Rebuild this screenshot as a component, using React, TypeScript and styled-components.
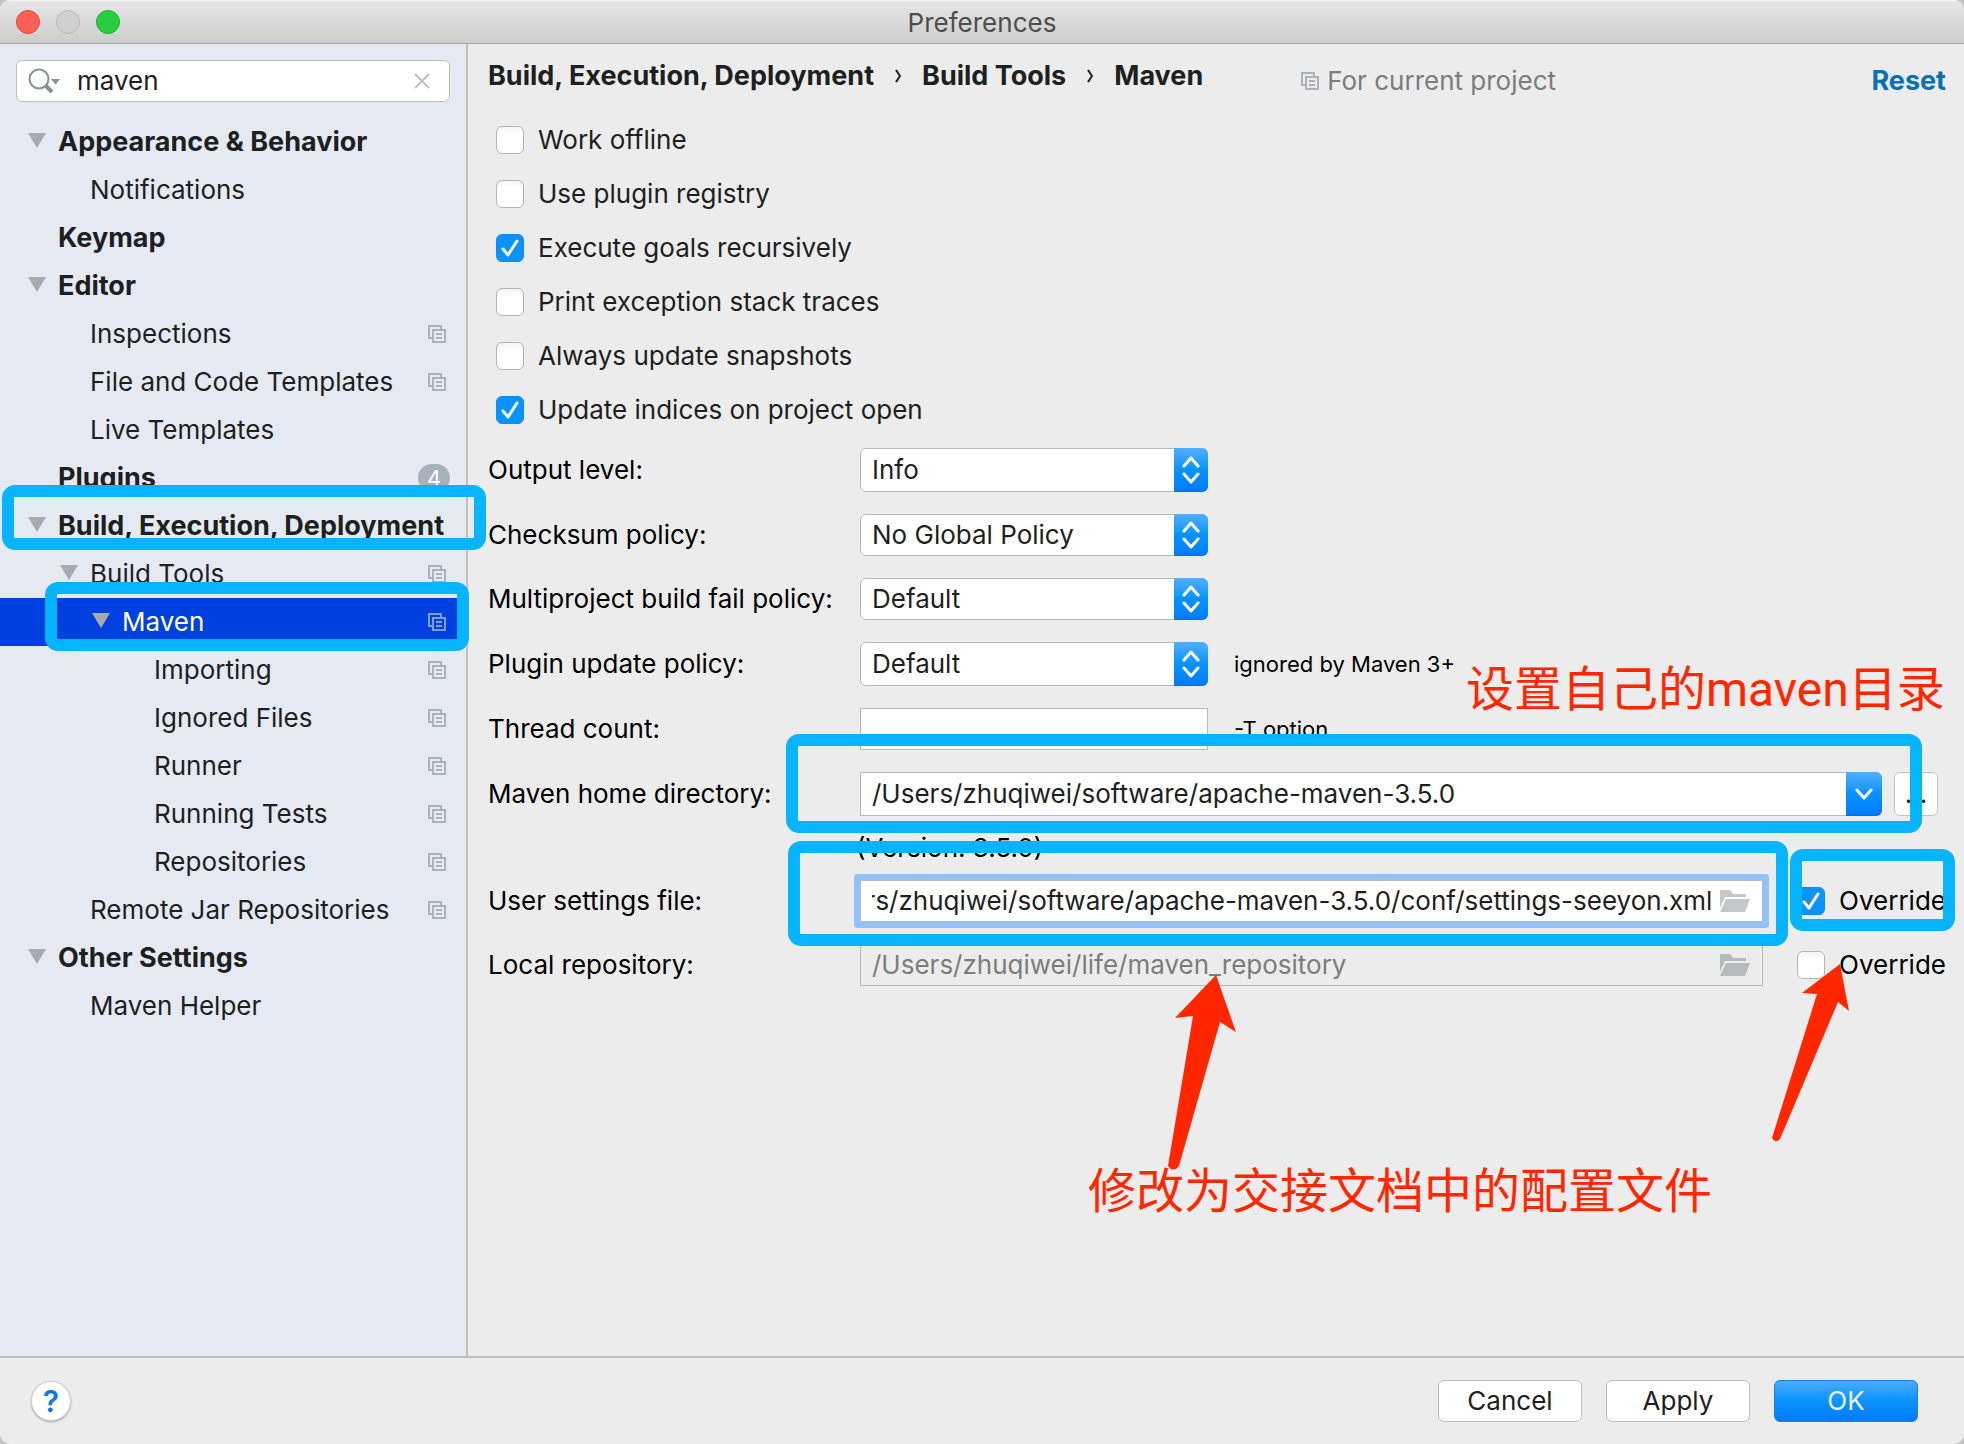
import React, { useLayoutEffect, useRef, useState } from "react";
import styled, { createGlobalStyle, css } from "styled-components";

const uiFont = `Inter, "Noto Sans CJK SC", sans-serif`;

const GlobalStyle = createGlobalStyle`
  *, *::before, *::after { box-sizing: border-box; }
  body { margin: 0; background: #c4c4c4; }
  body, input, select, button { font-family: ${uiFont}; font-size: 26px; line-height: 32px; }
`;

const Window = styled.div`
  position: relative;
  display: flex;
  flex-direction: column;
  min-height: 100vh;
  border-radius: 10px;
  overflow: hidden;
  background: #ececec;
  color: #1d1f21;
`;

/* ---------- title bar ---------- */
const TitleBar = styled.header`
  display: grid;
  grid-template-columns: 1fr auto 1fr;
  align-items: center;
  height: 44px;
  padding: 0 16px;
  border-top: 1px solid #f4f4f4;
  border-bottom: 1px solid #a5a5a5;
  background: linear-gradient(#e6e6e6, #cdcdcd);
`;
const Lights = styled.div`
  display: flex;
  gap: 16px;
`;
const Light = styled.button<{ $fill: string; $edge: string }>`
  width: 24px;
  height: 24px;
  padding: 0;
  border: 1px solid ${(p) => p.$edge};
  border-radius: 50%;
  background: ${(p) => p.$fill};
`;
const Title = styled.h1`
  margin: 0;
  padding-top: 2px;
  font-size: 26px;
  line-height: 32px;
  font-weight: 400;
  color: #4d4d4d;
`;

/* ---------- sidebar ---------- */
const Main = styled.div`
  display: flex;
  flex: 1;
`;
const Sidebar = styled.aside`
  flex: 0 0 468px;
  min-width: 0;
  border-right: 2px solid #c0c0c0;
  background: #e5eaf2;
`;
const SearchBox = styled.div`
  display: flex;
  align-items: center;
  height: 42px;
  margin: 16px;
  padding: 0 19px 0 11px;
  border: 1px solid #bcbfc2;
  border-radius: 6px;
  background: #fff;
`;
const SearchInput = styled.input`
  flex: 1;
  min-width: 0;
  margin-left: 16px;
  padding: 0;
  border: 0;
  outline: 0;
  background: none;
  color: #1d1f21;
`;
const IconButton = styled.button`
  display: flex;
  padding: 0;
  border: 0;
  background: none;
`;
const Tree = styled.ul`
  margin: 0;
  padding: 0;
  list-style: none;
`;
const TreeRow = styled.li<{ $level: number; $bold?: boolean; $selected?: boolean }>`
  display: flex;
  align-items: center;
  height: 48px;
  padding: 0 20px 0 ${(p) => 28 + 32 * p.$level}px;
  ${(p) => p.$bold && "font-size: 27px; font-weight: 700;"}
  ${(p) =>
    p.$selected &&
    css`
      background: #0040e0;
      color: #fff;
    `}
`;
const TwistySlot = styled.span`
  display: flex;
  flex: 0 0 30px;
  padding-bottom: 4px;
`;
const RowText = styled.span`
  flex: 1;
  white-space: nowrap;
`;
const CountBadge = styled.span`
  width: 32px;
  height: 28px;
  margin-right: -4px;
  border-radius: 14px;
  background: #a7b1ba;
  color: #fff;
  font-size: 22px;
  line-height: 28px;
  font-weight: 400;
  text-align: center;
`;

/* ---------- content ---------- */
const Content = styled.main`
  flex: 1;
  min-width: 0;
  padding: 16px 18px 16px 20px;
`;
const ContentHead = styled.div`
  display: flex;
  height: 42px;
`;
const Crumbs = styled.nav`
  display: flex;
  align-self: flex-start;
  gap: 20px;
  font-size: 27px;
  font-weight: 700;
  white-space: nowrap;
`;
const Separator = styled.span`
  display: flex;
  align-items: center;
`;
const Scope = styled.div`
  display: flex;
  align-items: center;
  gap: 8px;
  margin-left: 98px;
  color: #7c7c7c;
  white-space: nowrap;
`;
const ResetLink = styled.a`
  align-self: center;
  margin-left: auto;
  color: #0a6fb5;
  font-size: 27px;
  font-weight: 700;
  text-decoration: none;
`;
const CheckList = styled.div`
  display: flex;
  flex-direction: column;
  gap: 22px;
  padding: 22px 8px;
`;
const CheckLabel = styled.label`
  display: flex;
  align-items: center;
  gap: 14px;
  white-space: nowrap;
`;
const CheckCell = styled.span`
  display: grid;
  width: 28px;
  height: 32px;
  align-items: center;
  & > * { grid-area: 1 / 1; }
  & > svg { pointer-events: none; }
`;
const CheckInput = styled.input`
  appearance: none;
  width: 28px;
  height: 28px;
  margin: 0;
  border: 1px solid #b4b4b4;
  border-radius: 6px;
  background: linear-gradient(#f3f3f3, #fff 25%);
  &:checked {
    border-color: #0a8cff;
    background: #0a93ff;
  }
`;

const Form = styled.div`
  display: flex;
  flex-direction: column;
  gap: 22px;
`;
const FormRow = styled.div<{ $tall?: boolean }>`
  display: grid;
  grid-template-columns: 372px minmax(0, 1fr);
  align-items: center;
  height: ${(p) => (p.$tall ? 44 : 42)}px;
  color: #000;
`;
const FieldArea = styled.div<{ $gap: number }>`
  display: flex;
  align-items: center;
  align-self: stretch;
  gap: ${(p) => p.$gap}px;
`;
const Hint = styled.span`
  font-size: 22px;
  line-height: 28px;
`;
const VersionNote = styled.div`
  height: 20px;
  padding-left: 368px;
  line-height: 20px;
  color: #000;
`;
const SelectCell = styled.span<{ $grow?: boolean }>`
  display: grid;
  align-self: stretch;
  justify-items: end;
  ${(p) => (p.$grow ? "flex: 1;" : "flex: 0 0 348px;")}
  & > * { grid-area: 1 / 1; }
`;
const SelectBox = styled.select<{ $square?: boolean }>`
  appearance: none;
  width: 100%;
  padding: 0 44px 0 11px;
  border: 1px solid #b9b9b9;
  border-radius: ${(p) => (p.$square ? "0 6px 6px 0" : "6px")};
  background: #fff;
  color: #1d1f21;
`;
const ArrowCap = styled.span<{ $wide?: boolean }>`
  display: grid;
  place-items: center;
  width: ${(p) => (p.$wide ? 36 : 34)}px;
  border-radius: 0 6px 6px 0;
  border-bottom: 1px solid #0a6be0;
  background: linear-gradient(#53aeff, #0a93ff 50%, #007bff);
  pointer-events: none;
`;
const ThreadInput = styled.input`
  align-self: stretch;
  width: 348px;
  padding: 0 11px;
  border: 1px solid #b9b9b9;
  background: #fff;
  outline: 0;
`;
const PathField = styled.div<{ $focused?: boolean }>`
  display: flex;
  flex: 1;
  align-self: stretch;
  align-items: center;
  gap: 8px;
  min-width: 0;
  padding: 0 12px 0 11px;
  border: 1px solid #b9b9b9;
  background: ${(p) => (p.$focused ? "#fff" : "none")};
  ${(p) => p.$focused && "box-shadow: 0 0 0 6px #8fc3f9; border-radius: 1px;"}
`;
const PathInput = styled.input`
  flex: 1;
  min-width: 0;
  padding: 0;
  border: 0;
  outline: 0;
  background: none;
  color: #1d1f21;
  &:disabled { color: #7c7c7c; }
`;
const BrowseButton = styled.button`
  align-self: stretch;
  width: 44px;
  margin-right: 8px;
  padding: 0;
  border: 1px solid #c2c2c2;
  border-radius: 6px;
  background: #fff;
  color: #1d1f21;
`;

/* ---------- footer ---------- */
const Footer = styled.footer`
  display: flex;
  align-items: center;
  gap: 24px;
  height: 88px;
  padding: 0 46px 0 31px;
  border-top: 2px solid #bfbfbf;
`;
const HelpButton = styled.button`
  width: 40px;
  height: 40px;
  margin-right: auto;
  padding: 0;
  border: 1px solid #d0d0d0;
  border-radius: 50%;
  background: #fff;
  box-shadow: 0 1px 2px rgba(0, 0, 0, 0.3);
  color: #0a78e6;
  font-size: 30px;
  font-weight: 600;
`;
const PushButton = styled.button<{ $primary?: boolean }>`
  width: 144px;
  height: 42px;
  padding: 0;
  border: 1px solid ${(p) => (p.$primary ? "#1583ee" : "#bdbdbd")};
  border-radius: 6px;
  background: ${(p) => (p.$primary ? "linear-gradient(#4aacff, #0a93ff 50%, #007aff)" : "#fff")};
  color: ${(p) => (p.$primary ? "#e9f5ff" : "#1d1f21")};
`;

/* ---------- annotations drawn over the window ---------- */
const Marker = styled.div<{ $x: number; $y: number; $w: number; $h: number }>`
  position: absolute;
  left: ${(p) => p.$x}px;
  top: ${(p) => p.$y}px;
  width: ${(p) => p.$w}px;
  height: ${(p) => p.$h}px;
  border: 12px solid #06b4ff;
  border-radius: 13px;
  pointer-events: none;
`;
const Note = styled.div<{ $x: number; $y: number }>`
  position: absolute;
  left: ${(p) => p.$x}px;
  top: ${(p) => p.$y}px;
  color: #ff2600;
  font-family: Roboto, "Noto Sans CJK SC", sans-serif;
  font-size: 48px;
  line-height: 56px;
  white-space: nowrap;
  pointer-events: none;
`;
const Arrows = styled.svg`
  position: absolute;
  left: 1160px;
  top: 960px;
  pointer-events: none;
`;

const ProjectIcon = ({ color = "#aab3bb" }: { color?: string }) => (
  <svg width="18" height="18" viewBox="0 0 18 18" fill="none" stroke={color} strokeWidth="2" aria-hidden="true">
    <path d="M4 13H1V1h12v3" />
    <path d="M5 5h12v12H5z" />
    <path d="M8 9h6M8 13h6" />
  </svg>
);

const Twisty = () => (
  <svg width="18" height="15" viewBox="0 0 18 15" aria-hidden="true">
    <path d="M0 0h18L9 15z" fill="#aaaaaa" />
  </svg>
);

const SearchIcon = () => (
  <svg width="33" height="26" viewBox="0 0 33 26" fill="none" aria-hidden="true">
    <circle cx="11" cy="11" r="9.5" stroke="#84919a" strokeWidth="2" />
    <path d="M17 17l7 7" stroke="#84919a" strokeWidth="4" />
    <path d="M23 11h9l-4.500 5.500z" fill="#84919a" />
  </svg>
);

const ClearIcon = () => (
  <svg width="16" height="16" viewBox="0 0 16 16" stroke="#bcc1c5" strokeWidth="2" aria-hidden="true">
    <path d="M1 1l14 14M15 1L1 15" />
  </svg>
);

const FolderIcon = ({ color }: { color: string }) => (
  <svg width="30" height="22" viewBox="0 0 30 22" fill={color} aria-hidden="true">
    <path d="M0 0h10l3 4h13v3H5L0 18z" />
    <path d="M6 9h24l-5 13H0z" />
  </svg>
);

const Chevrons = () => (
  <svg width="18" height="28" viewBox="0 0 18 28" fill="none" stroke="#fff" strokeWidth="3" strokeLinecap="round" strokeLinejoin="round" aria-hidden="true">
    <path d="M2 10l7-8 7 8M2 18l7 8 7-8" />
  </svg>
);

const ChevronDown = () => (
  <svg width="18" height="12" viewBox="0 0 18 12" fill="none" stroke="#fff" strokeWidth="3" strokeLinecap="round" strokeLinejoin="round" aria-hidden="true">
    <path d="M2 2l7 8 7-8" />
  </svg>
);

const CrumbChevron = () => (
  <svg width="8" height="14" viewBox="0 0 8 14" fill="none" stroke="#1d1f21" strokeWidth="2" aria-hidden="true">
    <path d="M2 1l4 6-4 6" />
  </svg>
);

function Check({ label, initial = false }: { label: string; initial?: boolean }) {
  const [on, setOn] = useState(initial);
  return (
    <CheckLabel>
      <CheckCell>
        <CheckInput type="checkbox" checked={on} onChange={() => setOn(!on)} />
        {on && (
          <svg width="28" height="28" viewBox="0 0 28 28" fill="none" stroke="#fff" strokeWidth="3" strokeLinecap="round" strokeLinejoin="round">
            <path d="M7 15l5 6 9-14" />
          </svg>
        )}
      </CheckCell>
      {label}
    </CheckLabel>
  );
}

type Node = { text: string; level: number; bold?: boolean; open?: boolean; project?: boolean; count?: number; selected?: boolean };

const nodes: Node[] = [
  { text: "Appearance & Behavior", level: 0, bold: true, open: true },
  { text: "Notifications", level: 1 },
  { text: "Keymap", level: 0, bold: true },
  { text: "Editor", level: 0, bold: true, open: true },
  { text: "Inspections", level: 1, project: true },
  { text: "File and Code Templates", level: 1, project: true },
  { text: "Live Templates", level: 1 },
  { text: "Plugins", level: 0, bold: true, count: 4 },
  { text: "Build, Execution, Deployment", level: 0, bold: true, open: true },
  { text: "Build Tools", level: 1, open: true, project: true },
  { text: "Maven", level: 2, open: true, project: true, selected: true },
  { text: "Importing", level: 3, project: true },
  { text: "Ignored Files", level: 3, project: true },
  { text: "Runner", level: 3, project: true },
  { text: "Running Tests", level: 3, project: true },
  { text: "Repositories", level: 3, project: true },
  { text: "Remote Jar Repositories", level: 1, project: true },
  { text: "Other Settings", level: 0, bold: true, open: true },
  { text: "Maven Helper", level: 1 },
];

const options = [
  { text: "Work offline" },
  { text: "Use plugin registry" },
  { text: "Execute goals recursively", on: true },
  { text: "Print exception stack traces" },
  { text: "Always update snapshots" },
  { text: "Update indices on project open", on: true },
];

const policies = [
  { id: "output", label: "Output level:", value: "Info", tall: true },
  { id: "checksum", label: "Checksum policy:", value: "No Global Policy" },
  { id: "fail", label: "Multiproject build fail policy:", value: "Default" },
  { id: "update", label: "Plugin update policy:", value: "Default", tall: true, hint: "ignored by Maven 3+" },
];

export default function App() {
  const settingsRef = useRef<HTMLInputElement>(null);

  // Keep the file name visible at the end of a long path.
  useLayoutEffect(() => {
    const el = settingsRef.current;
    if (el) el.scrollLeft = el.scrollWidth;
  }, []);

  return (
    <>
      <GlobalStyle />
      <Window>
        <TitleBar>
          <Lights>
            <Light aria-label="Close" $fill="#ff5f57" $edge="#e2463f" />
            <Light aria-label="Minimize" $fill="#d0d0d0" $edge="#b5b5b5" />
            <Light aria-label="Zoom" $fill="#28cd41" $edge="#1dad2b" />
          </Lights>
          <Title>Preferences</Title>
        </TitleBar>

        <Main>
          <Sidebar>
            <SearchBox>
              <SearchIcon />
              <SearchInput aria-label="Search settings" defaultValue="maven" />
              <IconButton aria-label="Clear search">
                <ClearIcon />
              </IconButton>
            </SearchBox>
            <Tree>
              {nodes.map((n) => (
                <TreeRow key={n.text} $level={n.level} $bold={n.bold} $selected={n.selected}>
                  <TwistySlot>{n.open && <Twisty />}</TwistySlot>
                  <RowText>{n.text}</RowText>
                  {n.project && <ProjectIcon color={n.selected ? "#7f9fd2" : undefined} />}
                  {n.count && <CountBadge>{n.count}</CountBadge>}
                </TreeRow>
              ))}
            </Tree>
          </Sidebar>

          <Content>
            <ContentHead>
              <Crumbs aria-label="Breadcrumb">
                <span>Build, Execution, Deployment</span>
                <Separator><CrumbChevron /></Separator>
                <span>Build Tools</span>
                <Separator><CrumbChevron /></Separator>
                <span>Maven</span>
              </Crumbs>
              <Scope>
                <ProjectIcon />
                For current project
              </Scope>
              <ResetLink href="#reset">Reset</ResetLink>
            </ContentHead>

            <CheckList>
              {options.map((o) => (
                <Check key={o.text} label={o.text} initial={o.on} />
              ))}
            </CheckList>

            <Form>
              {policies.map((p) => (
                <FormRow key={p.id} $tall={p.tall}>
                  <label htmlFor={p.id}>{p.label}</label>
                  <FieldArea $gap={26}>
                    <SelectCell>
                      <SelectBox id={p.id}>
                        <option>{p.value}</option>
                      </SelectBox>
                      <ArrowCap><Chevrons /></ArrowCap>
                    </SelectCell>
                    {p.hint && <Hint>{p.hint}</Hint>}
                  </FieldArea>
                </FormRow>
              ))}
              <FormRow>
                <label htmlFor="threads">Thread count:</label>
                <FieldArea $gap={26}>
                  <ThreadInput id="threads" />
                  <Hint>-T option</Hint>
                </FieldArea>
              </FormRow>
              <FormRow $tall>
                <label htmlFor="home">Maven home directory:</label>
                <FieldArea $gap={12}>
                  <SelectCell $grow>
                    <SelectBox id="home" $square>
                      <option>/Users/zhuqiwei/software/apache-maven-3.5.0</option>
                    </SelectBox>
                    <ArrowCap $wide><ChevronDown /></ArrowCap>
                  </SelectCell>
                  <BrowseButton>...</BrowseButton>
                </FieldArea>
              </FormRow>
              <VersionNote>(Version: 3.5.0)</VersionNote>
              <FormRow>
                <label htmlFor="settings">User settings file:</label>
                <FieldArea $gap={34}>
                  <PathField $focused>
                    <PathInput
                      id="settings"
                      ref={settingsRef}
                      defaultValue="/Users/zhuqiwei/software/apache-maven-3.5.0/conf/settings-seeyon.xml"
                    />
                    <IconButton aria-label="Browse settings file"><FolderIcon color="#c3c8cc" /></IconButton>
                  </PathField>
                  <Check label="Override" initial />
                </FieldArea>
              </FormRow>
              <FormRow>
                <label htmlFor="repository">Local repository:</label>
                <FieldArea $gap={34}>
                  <PathField>
                    <PathInput id="repository" disabled defaultValue="/Users/zhuqiwei/life/maven_repository" />
                    <IconButton aria-label="Browse repository" disabled><FolderIcon color="#b5babd" /></IconButton>
                  </PathField>
                  <Check label="Override" />
                </FieldArea>
              </FormRow>
            </Form>
          </Content>
        </Main>

        <Footer>
          <HelpButton aria-label="Help">?</HelpButton>
          <PushButton>Cancel</PushButton>
          <PushButton>Apply</PushButton>
          <PushButton $primary>OK</PushButton>
        </Footer>

        <Marker $x={2} $y={485} $w={484} $h={65} />
        <Marker $x={45} $y={582} $w={424} $h={69} />
        <Marker $x={786} $y={734} $w={1136} $h={99} />
        <Marker $x={788} $y={841} $w={1000} $h={105} />
        <Marker $x={1790} $y={849} $w={165} $h={82} />
        <Arrows width="700" height="220" viewBox="1160 960 700 220" fill="#ff2600" aria-hidden="true">
          <path d="M1216 975L1236 1032L1220 1022L1179 1166Q1173 1173 1168 1166L1193 1016L1175 1018Z" />
          <path d="M1840 964L1849 1011L1838 1002L1780 1139Q1775 1144 1772 1138L1817 994L1802 993Z" />
        </Arrows>
        <Note $x={1466} $y={662}>设置自己的maven目录</Note>
        <Note $x={1088} $y={1164}>修改为交接文档中的配置文件</Note>
      </Window>
    </>
  );
}
